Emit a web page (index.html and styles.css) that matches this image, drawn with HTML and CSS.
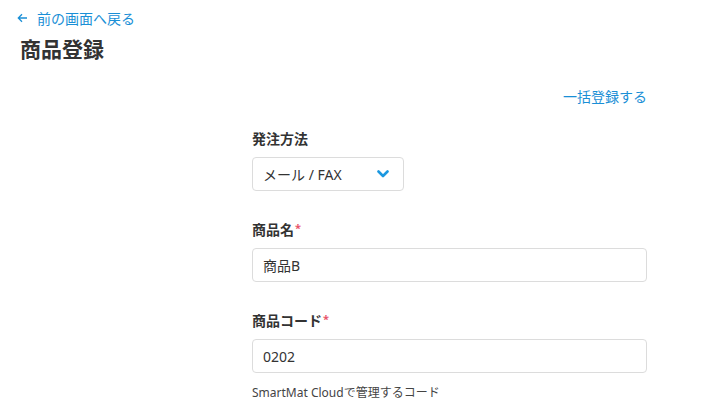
FILE: index.html
```html
<!DOCTYPE html>
<html lang="ja">
<head>
<meta charset="utf-8">
<title>商品登録</title>
<link rel="stylesheet" href="styles.css">
</head>
<body>
<header class="page-head">
  <a class="back-link" href="#">
    <svg class="back-icon" width="11" height="10" viewBox="0 0 11 10"><path d="M10 5H1.5M5 1.3L1.3 5 5 8.7" fill="none" stroke="currentColor" stroke-width="1.3"/></svg>
    <span>前の画面へ戻る</span>
  </a>
  <h1 class="page-title">商品登録</h1>
</header>
<main class="form-wrap">
  <div class="bulk-row"><a class="bulk-link" href="#">一括登録する</a></div>
  <div class="field">
    <label class="field-label">発注方法</label>
    <div class="select">
      <span>メール / FAX</span>
      <svg class="chev" width="12" height="8" viewBox="0 0 12 8"><path d="M1.5 1.5L6 6l4.5-4.5" fill="none" stroke="#1b98e0" stroke-width="2.6" stroke-linecap="round" stroke-linejoin="round"/></svg>
    </div>
  </div>
  <div class="field">
    <label class="field-label">商品名<span class="req">*</span></label>
    <div class="input">商品B</div>
  </div>
  <div class="field">
    <label class="field-label">商品コード<span class="req">*</span></label>
    <div class="input">0202</div>
    <p class="help">SmartMat Cloudで管理するコード</p>
  </div>
</main>
</body>
</html>
```
FILE: styles.css
```css
* { box-sizing: border-box; }
body {
  margin: 0;
  background: #fff;
  font-family: "Noto Sans", "Noto Sans CJK JP", sans-serif;
  color: #333;
}
.page-head {
  padding: 8px 20px 0 17px;
}
.back-link {
  display: flex;
  align-items: center;
  gap: 9px;
  height: 20px;
  font-size: 14px;
  color: #1a8fd6;
  text-decoration: none;
}
.back-icon { display: block; }
.page-title {
  margin: 7px 0 0 3px;
  font-size: 21px;
  line-height: 28px;
  font-weight: 700;
  color: #333;
}
.form-wrap {
  width: 395px;
  margin: 24px 0 0 252px;
}
.bulk-row {
  display: flex;
  justify-content: flex-end;
  height: 20px;
  line-height: 20px;
}
.bulk-link {
  font-size: 14px;
  color: #1a8fd6;
  text-decoration: none;
}
.field { margin-top: 22px; }
.field + .field { margin-top: 29px; }
.field-label {
  display: block;
  height: 20px;
  font-size: 14px;
  line-height: 20px;
  font-weight: 700;
  color: #333;
}
.req {
  color: #e8546b;
  font-size: 11px;
  line-height: 0;
  vertical-align: 3px;
  margin-left: 1px;
}
.select, .input {
  margin-top: 8px;
  height: 34px;
  border: 1px solid #dcdcdc;
  border-radius: 4px;
  padding: 0 10px;
  display: flex;
  align-items: center;
  font-size: 14px;
  color: #333;
}
.select {
  width: 152px;
  justify-content: space-between;
  padding-right: 14px;
}
.chev { display: block; }
.help {
  margin: 11px 0 0;
  font-size: 12px;
  line-height: 18px;
  color: #444;
}
```
